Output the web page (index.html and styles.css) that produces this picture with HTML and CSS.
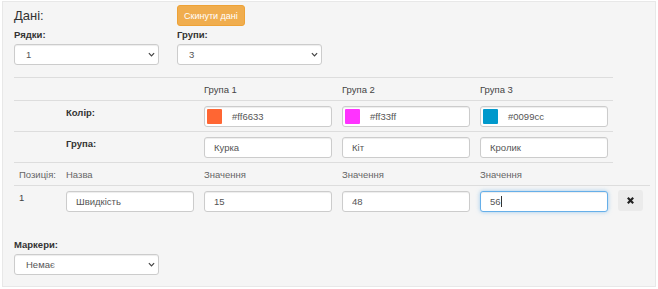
FILE: index.html
```html
<!DOCTYPE html>
<html lang="uk">
<head>
  <meta charset="UTF-8" />
  <meta name="viewport" content="width=device-width, initial-scale=1.0" />
  <title>Дані діаграми</title>
  <link rel="stylesheet" href="styles.css">
</head>
<body>
  <div class="panel">
    <!-- Top controls -->
    <div class="top-grid">
      <div class="data-title">Дані:</div>
      <div><button class="btn-reset">Скинути дані</button></div>
      <div class="field">
        <label>Рядки:</label>
        <div class="select-wrap">
          <select><option>1</option></select>
          <svg class="chevron" viewBox="0 0 8 5"><path d="M1 1l3 3 3-3" /></svg>
        </div>
      </div>
      <div class="field">
        <label>Групи:</label>
        <div class="select-wrap">
          <select><option>3</option></select>
          <svg class="chevron" viewBox="0 0 8 5"><path d="M1 1l3 3 3-3" /></svg>
        </div>
      </div>
    </div>

    <!-- Data table -->
    <table class="data-table">
      <colgroup>
        <col class="c-pos"><col class="c-name"><col class="c-val"><col class="c-val"><col class="c-val"><col class="c-del">
      </colgroup>
      <tr>
        <td></td><td></td>
        <td>Група 1</td><td>Група 2</td><td>Група 3</td>
      </tr>
      <tr>
        <td></td><td class="row-label">Колір:</td>
        <td><div class="color-input"><span class="swatch" style="background:#ff6633"></span>#ff6633</div></td>
        <td><div class="color-input"><span class="swatch" style="background:#ff33ff"></span>#ff33ff</div></td>
        <td><div class="color-input"><span class="swatch" style="background:#0099cc"></span>#0099cc</div></td>
      </tr>
      <tr>
        <td></td><td class="row-label">Група:</td>
        <td><input type="text" value="Курка"></td>
        <td><input type="text" value="Кіт"></td>
        <td><input type="text" value="Кролик"></td>
      </tr>
      <tr class="muted">
        <td>Позиція:</td><td>Назва</td>
        <td>Значення</td><td>Значення</td><td>Значення</td>
      </tr>
      <tr>
        <td>1</td>
        <td><input type="text" value="Швидкість"></td>
        <td><input type="text" value="15"></td>
        <td><input type="text" value="48"></td>
        <td><div class="text-input focused">56<span class="caret"></span></div></td>
        <td>
          <button class="btn-del">
            <svg viewBox="0 0 10 10"><path d="M2 2l6 6M8 2l-6 6" /></svg>
          </button>
        </td>
      </tr>
    </table>

    <!-- Markers -->
    <div class="field markers">
      <label>Маркери:</label>
      <div class="select-wrap">
        <select><option>Немає</option></select>
        <svg class="chevron" viewBox="0 0 8 5"><path d="M1 1l3 3 3-3" /></svg>
      </div>
    </div>
  </div>
</body>
</html>
```

FILE: styles.css
```css
* {
  margin: 0;
  padding: 0;
  box-sizing: border-box;
}
body {
  font-family: 'Liberation Sans', Arial, sans-serif;
  font-size: 10px;
  color: #333;
  background: #fff;
  padding: 1px 2px 2px 2px;
}
.panel {
  background: #f5f5f5;
  border: 1px solid #e8e8e8;
  min-height: 286px;
  padding: 3px 11px 10px 11px;
}
/* Top controls */
.top-grid {
  display: grid;
  grid-template-columns: 145px 145px;
  column-gap: 18px;
}
.data-title {
  font-size: 13px;
  line-height: 21px;
}
.btn-reset {
  display: block;
  height: 21px;
  padding: 0 6px;
  background: #f0ad4e;
  border: 1px solid #eea236;
  border-radius: 3px;
  color: #fff;
  font-family: inherit;
  font-size: 9px;
}
.field label {
  display: block;
  font-weight: bold;
  font-size: 9.5px;
  line-height: 13px;
  margin-top: 2px;
  margin-bottom: 3px;
}
.select-wrap {
  position: relative;
}
.select-wrap select {
  display: block;
  width: 100%;
  height: 21px;
  padding: 0 11px;
  appearance: none;
  -webkit-appearance: none;
  background: #fff;
  border: 1px solid #ccc;
  border-radius: 3px;
  box-shadow: inset 0 1px 1px rgba(0,0,0,0.075);
  font-family: inherit;
  font-size: 9.5px;
  color: #555;
}
.chevron {
  position: absolute;
  right: 4px;
  top: 8px;
  width: 7px;
  height: 5px;
  fill: none;
  stroke: #444;
  stroke-width: 1.4;
}
/* Data table */
.data-table {
  border-collapse: collapse;
  table-layout: fixed;
  width: 636px;
  margin-top: 12px;
}
.c-pos { width: 47px; }
.c-name { width: 138px; }
.c-val { width: 138px; }
.c-del { width: 37px; }
.data-table td {
  border-top: 1px solid #dddddd;
  padding: 5px 5px 4px 5px;
  vertical-align: top;
  line-height: 13px;
  font-size: 9.5px;
  color: #444;
}
.data-table .muted td {
  color: #666;
}
.data-table .row-label {
  font-weight: bold;
  color: #333;
}
.data-table input,
.text-input,
.color-input {
  display: block;
  width: 100%;
  height: 21px;
  padding: 0 9px;
  background: #fff;
  border: 1px solid #ccc;
  border-radius: 3px;
  box-shadow: inset 0 1px 1px rgba(0,0,0,0.075);
  font-family: inherit;
  font-size: 9.5px;
  line-height: 19px;
  color: #555;
}
.color-input {
  display: flex;
  align-items: center;
  gap: 10px;
  padding-left: 2px;
}
.swatch {
  width: 15px;
  height: 15px;
  border-radius: 1px;
}
.text-input.focused {
  border-color: #66afe9;
  box-shadow: inset 0 1px 1px rgba(0,0,0,0.075), 0 0 4px rgba(102,175,233,0.6);
}
.caret {
  display: inline-block;
  width: 1px;
  height: 11px;
  background: #333;
  vertical-align: -2px;
}
.btn-del {
  display: flex;
  align-items: center;
  justify-content: center;
  width: 25px;
  height: 21px;
  margin-top: -1px;
  background: #ebebeb;
  border: none;
  border-radius: 3px;
}
.btn-del svg {
  width: 9px;
  height: 9px;
  stroke: #222;
  stroke-width: 2.4;
}
/* Markers */
.markers {
  width: 145px;
  margin-top: 22px;
}
```
